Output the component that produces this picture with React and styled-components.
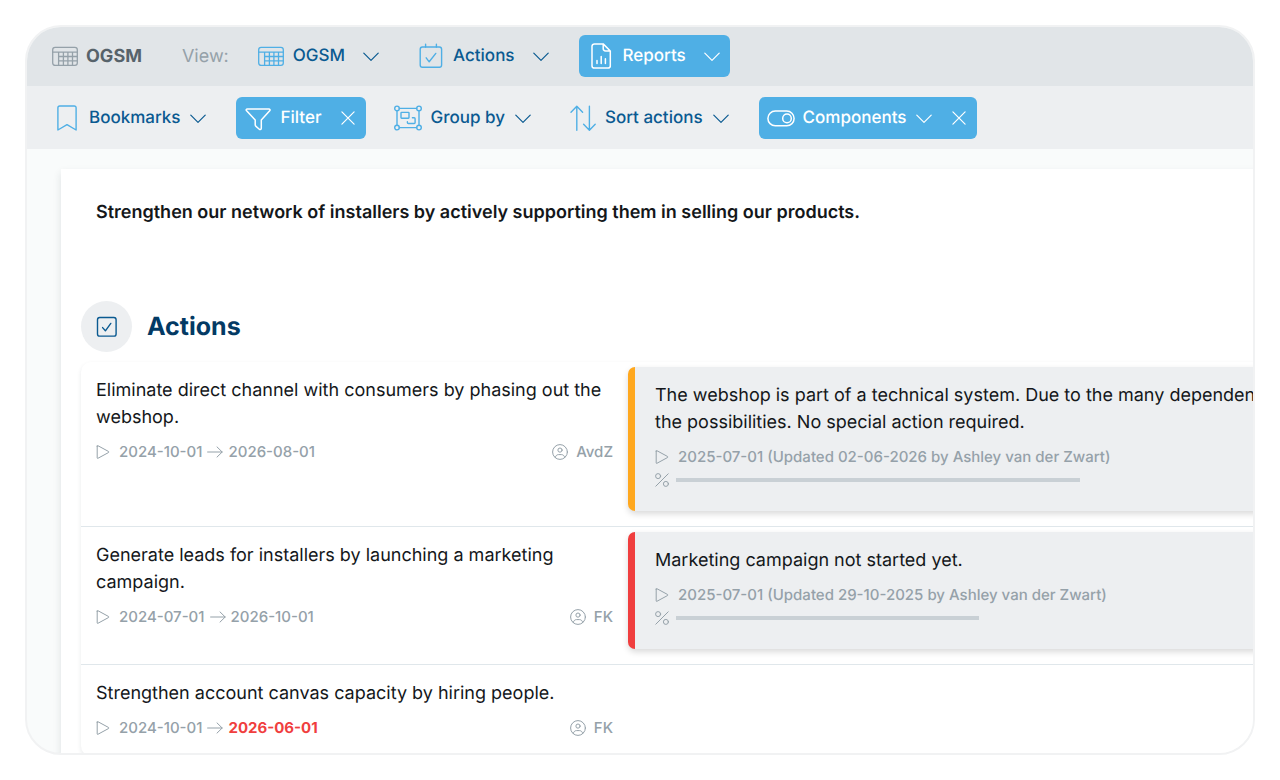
import React from "react";
import styled, { createGlobalStyle, css } from "styled-components";

const color = {
  sky: "#4fafe5",
  navy: "#0a5a91",
  heading: "#033a64",
  ink: "#14171a",
  muted: "#95a1a9",
  slate: "#57636b",
  line: "#e0e7eb",
  panel: "#edeff1",
  bar: "#c9d0d5",
  red: "#f03e3e",
  amber: "#ffa81f",
};

const GlobalStyle = createGlobalStyle`
  *, *::before, *::after { box-sizing: border-box; }
  body {
    margin: 0;
    background: #ffffff;
    color: ${color.ink};
    font-family: Inter, "Liberation Sans", sans-serif;
    text-rendering: geometricPrecision;
  }
  h1, h2, p, ul { margin: 0; padding: 0; }
  ul { list-style: none; }
`;

const Page = styled.div`
  height: 100vh;
  padding: 25px;
`;

const Frame = styled.div`
  display: flex;
  flex-direction: column;
  height: 100%;
  overflow: hidden;
  border: 2px solid #f1f2f3;
  border-radius: 36px;
  background: #f9fbfb;
`;

const Bar = styled.nav`
  display: flex;
  flex-shrink: 0;
  align-items: center;
  gap: 20px;
  height: ${(p) => (p.$primary ? 59 : 63)}px;
  padding: ${(p) => (p.$primary ? "0 18px 1px" : "0 18px")};
  background: ${(p) => (p.$primary ? "#e1e5e8" : color.panel)};
`;

const Brand = styled.div`
  display: flex;
  align-items: center;
  gap: 7px;
  padding: 0 20px 0 6px;
  color: ${color.slate};
  font-size: 18px;
  font-weight: 700;

  svg { color: ${color.muted}; }
`;

const ViewLabel = styled.span`
  color: ${color.muted};
  font-size: 18px;
`;

const Control = styled.div`
  display: flex;
  align-items: center;
  height: 42px;
  border-radius: 6px;
  color: ${color.navy};
  ${(p) =>
    p.$active &&
    css`
      background: ${color.sky};
      color: #ffffff;
    `}
`;

const ControlButton = styled.button`
  display: flex;
  align-items: center;
  gap: ${(p) => (p.$wide ? 18 : 10)}px;
  height: 100%;
  padding: 0 10px 0 8px;
  border: 0;
  background: none;
  color: inherit;
  font: inherit;
  font-size: 17px;
  font-weight: 500;
  text-rendering: inherit;
  white-space: nowrap;
  cursor: pointer;
`;

const ControlLabel = styled.span`
  display: flex;
  align-items: center;
  gap: 8px;

  svg { color: ${(p) => (p.$active ? "#ffffff" : color.sky)}; }
`;

const CloseButton = styled.button`
  display: flex;
  align-items: center;
  height: 100%;
  padding: 0 11px 0 10px;
  border: 0;
  background: none;
  color: inherit;
  cursor: pointer;
`;

const Canvas = styled.main`
  flex: 1;
  min-height: 0;
  overflow: hidden;
  padding: 20px 0 0 34px;
`;

const Sheet = styled.section`
  min-width: 1274px;
  min-height: 100%;
  padding: 30px 20px 40px;
  background: #ffffff;
  box-shadow: 0 4px 8px rgba(30, 50, 60, 0.12);
`;

const Strategy = styled.h1`
  padding: 0 15px;
  font-size: 18px;
  font-weight: 600;
  line-height: 27px;
`;

const SectionHead = styled.header`
  display: flex;
  align-items: center;
  gap: 15px;
  margin-top: 75px;
`;

const Badge = styled.span`
  display: flex;
  align-items: center;
  justify-content: center;
  width: 51px;
  height: 51px;
  border-radius: 50%;
  background: ${color.panel};
  color: ${color.navy};
`;

const SectionTitle = styled.h2`
  color: ${color.heading};
  font-size: 25px;
  font-weight: 700;
  line-height: 32px;
`;

const ActionList = styled.ul`
  margin-top: 10px;
  border-radius: 10px;
  box-shadow: 0 2px 4px rgba(30, 50, 60, 0.1);
`;

const ActionRow = styled.li`
  display: grid;
  grid-template-columns: 547px minmax(0, 1fr);
  align-items: start;
  padding: 5px 0 15px;
  border-bottom: 1px solid ${color.line};
`;

const ActionCell = styled.div`
  display: flex;
  flex-direction: column;
  gap: 9px;
  padding: 10px 15px 0;
`;

const StatusCard = styled.article`
  display: flex;
  flex-direction: column;
  gap: 9px;
  padding: 15px 20px 20px;
  border-left: 7px solid ${(p) => p.$tone};
  border-radius: 7px;
  background: ${color.panel};
  box-shadow: 0 3px 6px rgba(0, 0, 0, 0.15);
`;

const Text = styled.p`
  font-size: 18px;
  line-height: 27px;
`;

const Meta = styled.div`
  display: flex;
  align-items: center;
  justify-content: space-between;
  color: ${color.muted};
  font-size: 15px;
  font-weight: 500;
  line-height: 24px;
`;

const MetaGroup = styled.span`
  display: flex;
  align-items: center;
  gap: ${(p) => p.$gap}px;
`;

const DueDate = styled.time`
  ${(p) =>
    p.$late &&
    css`
      color: ${color.red};
      font-weight: 700;
    `}
`;

const ProgressRow = styled.div`
  display: flex;
  align-items: center;
  gap: 7px;
  height: 22px;
  color: ${color.muted};
`;

const ProgressTrack = styled.div`
  width: 505px;
  height: 4px;
`;

const ProgressFill = styled.div`
  height: 100%;
  background: ${color.bar};
`;

const Svg = styled.svg`
  display: block;
  flex-shrink: 0;
  fill: none;
  stroke: currentColor;
  stroke-linecap: round;
  stroke-linejoin: round;
`;

function Icon({ w = 28, h = 28, stroke = 1.4, children }) {
  return (
    <Svg width={w} height={h} viewBox={`0 0 ${w} ${h}`} strokeWidth={stroke} aria-hidden="true">
      {children}
    </Svg>
  );
}

const TableIcon = () => (
  <Icon stroke={1.3}>
    <rect x="1.7" y="5.4" width="24.6" height="18" rx="2.4" />
    <path d="M1.7 10.2H26.3M7.6 10.2V23M12.4 10.2V23M16.9 10.2V23M21.5 10.2V23M7.6 14.5H26M7.6 18.9H26" />
  </Icon>
);

const CalendarIcon = () => (
  <Icon>
    <rect x="3.2" y="5" width="21.4" height="20.2" rx="2.2" />
    <path d="M8.6 2.2V5M19.4 2.2V5M9.2 15.8L12.2 19.8L18.8 11.4" />
  </Icon>
);

const ReportIcon = () => (
  <Icon stroke={1.5}>
    <path d="M16.2 1.9H7.4A2.4 2.4 0 0 0 5 4.3V23.7A2.4 2.4 0 0 0 7.4 26.1H20.9A2.4 2.4 0 0 0 23.3 23.7V9ZM16.2 1.9V6.6A2.4 2.4 0 0 0 18.6 9H23.3M10 21.6V18.6M14.2 21.6V14.6M18.4 21.6V16.8" />
  </Icon>
);

const BookmarkIcon = () => (
  <Icon>
    <path d="M4.9 26V3.8A1.8 1.8 0 0 1 6.7 2H21.3A1.8 1.8 0 0 1 23.1 3.8V26L14 20.6Z" />
  </Icon>
);

const FunnelIcon = () => (
  <Icon stroke={1.5}>
    <path d="M3.4 5H24.8C26 5 26.4 6 25.7 6.8L17.3 16V24.2C17.3 25.4 16.2 26 15.3 25.2L12 22.4C11.4 21.9 11.2 21.4 11.2 20.8V16L2.6 6.8C1.8 6 2.2 5 3.4 5Z" />
  </Icon>
);

const GroupIcon = () => (
  <Icon>
    <circle cx="3" cy="4.4" r="2.3" />
    <circle cx="25" cy="4.4" r="2.3" />
    <circle cx="3" cy="23.6" r="2.3" />
    <circle cx="25" cy="23.6" r="2.3" />
    <path d="M5.3 4.4H22.7M5.3 23.6H22.7M3 6.7V21.3M25 6.7V21.3" />
    <rect x="7" y="8.4" width="8" height="5.8" rx="0.6" />
    <path d="M18.4 13.8H20.2A0.9 0.9 0 0 1 21.1 14.7V18.6A0.9 0.9 0 0 1 20.2 19.5H14.3A0.9 0.9 0 0 1 13.4 18.6V17.8" />
  </Icon>
);

const SortIcon = () => (
  <Icon>
    <path d="M7.8 26.2V2.4M2 8.2L7.8 2.2L13.6 8.2M20.4 2.2V26M14.6 20.2L20.4 26.2L26.2 20.2" />
  </Icon>
);

const ToggleIcon = () => (
  <Icon stroke={1.5}>
    <rect x="0.9" y="7" width="26.2" height="14.8" rx="7.4" />
    <circle cx="20" cy="14.4" r="4.3" />
  </Icon>
);

const ChevronIcon = () => (
  <Icon w={16} h={16} stroke={1.2}>
    <path d="M0.8 5.2L8 12.4L15.2 5.2" />
  </Icon>
);

const CloseIcon = () => (
  <Icon w={14} h={14} stroke={1.2}>
    <path d="M0.9 0.9L13.1 13.1M13.1 0.9L0.9 13.1" />
  </Icon>
);

const CheckboxIcon = () => (
  <Icon w={22} h={22} stroke={1.4}>
    <rect x="1.5" y="1.5" width="18.6" height="18.6" rx="2.2" />
    <path d="M6.6 11.6L9.4 14.8L14.8 7.4" />
  </Icon>
);

const PlayIcon = () => (
  <Icon w={14} h={14} stroke={1}>
    <path d="M1.2 1.1V12.9Q1.2 13.6 1.9 13.3L12.6 7.5Q13.2 7 12.6 6.5L1.9 0.7Q1.2 0.4 1.2 1.1Z" />
  </Icon>
);

const ArrowIcon = () => (
  <Icon w={16} h={12} stroke={1}>
    <path d="M0.6 6H15.2M10 0.9L15.2 6L10 11.1" />
  </Icon>
);

const UserIcon = () => (
  <Icon w={16} h={16} stroke={1}>
    <circle cx="8" cy="8" r="7.4" />
    <circle cx="8" cy="6.1" r="2.1" />
    <path d="M3.2 13.4C3.8 11.5 5 10.6 6.6 10.6H9.4C11 10.6 12.2 11.5 12.8 13.4" />
  </Icon>
);

const PercentIcon = () => (
  <Icon w={14} h={14} stroke={1}>
    <circle cx="3.1" cy="3.1" r="2.5" />
    <circle cx="10.9" cy="10.9" r="2.5" />
    <path d="M13.2 0.8L0.8 13.2" />
  </Icon>
);

function MenuControl({ icon, label, active, wide, menu = true, onClose }) {
  return (
    <Control $active={active}>
      <ControlButton type="button" $wide={wide} aria-haspopup={menu ? "menu" : undefined}>
        <ControlLabel $active={active}>
          {icon}
          {label}
        </ControlLabel>
        {menu && <ChevronIcon />}
      </ControlButton>
      {onClose && (
        <CloseButton type="button" aria-label={onClose}>
          <CloseIcon />
        </CloseButton>
      )}
    </Control>
  );
}

const actions = [
  {
    text: "Eliminate direct channel with consumers by phasing out the webshop.",
    start: "2024-10-01",
    end: "2026-08-01",
    owner: "AvdZ",
    status: {
      tone: color.amber,
      text: "The webshop is part of a technical system. Due to the many dependencies the possibilities. No special action required.",
      date: "2025-07-01 (Updated 02-06-2026 by Ashley van der Zwart)",
      progress: 80,
    },
  },
  {
    text: "Generate leads for installers by launching a marketing campaign.",
    start: "2024-07-01",
    end: "2026-10-01",
    owner: "FK",
    status: {
      tone: color.red,
      text: "Marketing campaign not started yet.",
      date: "2025-07-01 (Updated 29-10-2025 by Ashley van der Zwart)",
      progress: 60,
    },
  },
  {
    text: "Strengthen account canvas capacity by hiring people.",
    start: "2024-10-01",
    end: "2026-06-01",
    late: true,
    owner: "FK",
  },
];

function Status({ tone, text, date, progress }) {
  return (
    <StatusCard $tone={tone}>
      <Text>{text}</Text>
      <div>
        <Meta>
          <MetaGroup $gap={9}>
            <PlayIcon />
            {date}
          </MetaGroup>
        </Meta>
        <ProgressRow>
          <PercentIcon />
          <ProgressTrack
            role="progressbar"
            aria-label="Progress"
            aria-valuemin={0}
            aria-valuemax={100}
            aria-valuenow={progress}
          >
            <ProgressFill style={{ width: `${progress}%` }} />
          </ProgressTrack>
        </ProgressRow>
      </div>
    </StatusCard>
  );
}

function Action({ text, start, end, late, owner, status }) {
  return (
    <ActionRow>
      <ActionCell>
        <Text>{text}</Text>
        <Meta>
          <MetaGroup $gap={9}>
            <PlayIcon />
            <MetaGroup $gap={5}>
              <time>{start}</time>
              <ArrowIcon />
              <DueDate $late={late}>{end}</DueDate>
            </MetaGroup>
          </MetaGroup>
          <MetaGroup $gap={8}>
            <UserIcon />
            {owner}
          </MetaGroup>
        </Meta>
      </ActionCell>
      {status && <Status {...status} />}
    </ActionRow>
  );
}

export default function App() {
  return (
    <Page>
      <GlobalStyle />
      <Frame>
        <Bar $primary aria-label="Views">
          <Brand>
            <TableIcon />
            OGSM
          </Brand>
          <ViewLabel>View:</ViewLabel>
          <MenuControl icon={<TableIcon />} label="OGSM" wide />
          <MenuControl icon={<CalendarIcon />} label="Actions" wide />
          <MenuControl icon={<ReportIcon />} label="Reports" wide active />
        </Bar>
        <Bar aria-label="Tools">
          <MenuControl icon={<BookmarkIcon />} label="Bookmarks" />
          <MenuControl icon={<FunnelIcon />} label="Filter" active menu={false} onClose="Clear filter" />
          <MenuControl icon={<GroupIcon />} label="Group by" />
          <MenuControl icon={<SortIcon />} label="Sort actions" />
          <MenuControl icon={<ToggleIcon />} label="Components" active onClose="Reset components" />
        </Bar>
        <Canvas>
          <Sheet>
            <Strategy>
              Strengthen our network of installers by actively supporting them in selling our products.
            </Strategy>
            <SectionHead>
              <Badge>
                <CheckboxIcon />
              </Badge>
              <SectionTitle>Actions</SectionTitle>
            </SectionHead>
            <ActionList>
              {actions.map((action) => (
                <Action key={action.text} {...action} />
              ))}
            </ActionList>
          </Sheet>
        </Canvas>
      </Frame>
    </Page>
  );
}
